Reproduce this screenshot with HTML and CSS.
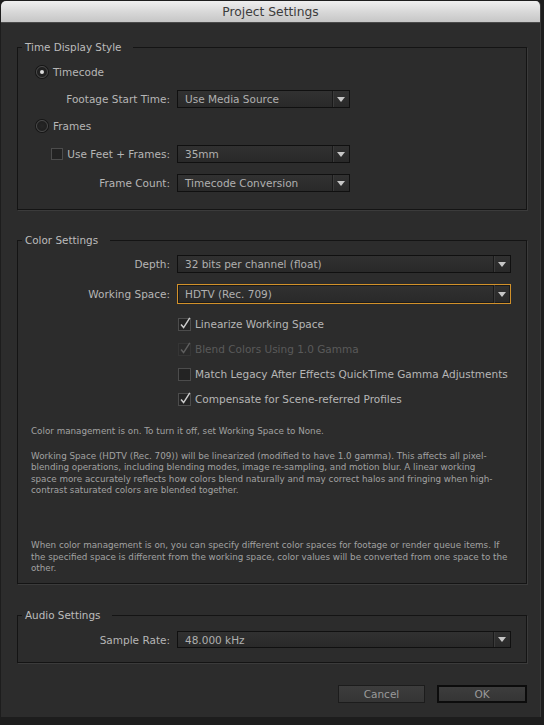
FILE: index.html
```html
<!DOCTYPE html>
<html lang="en">
<head>
<meta charset="utf-8">
<title>Project Settings</title>
<link rel="stylesheet" href="styles.css">
</head>
<body>
<div class="window">
  <div class="titlebar">Project Settings</div>
  <div class="content">
    <fieldset class="group g-time">
      <legend>Time Display Style</legend>
      <div class="radio-row tc-row"><span class="radio checked"></span><span class="lbl">Timecode</span></div>
      <div class="field-row footage-row">
        <span class="flabel">Footage Start Time:</span>
        <div class="select short"><span class="val">Use Media Source</span><span class="btn"><svg width="8" height="5" viewBox="0 0 8 5"><path d="M0 0H8L4 5Z" fill="#c6c6c6"/></svg></span></div>
      </div>
      <div class="radio-row frames-row"><span class="radio"></span><span class="lbl">Frames</span></div>
      <div class="field-row feet-row">
        <span class="flabel"><span class="box"></span>Use Feet + Frames:</span>
        <div class="select short"><span class="val">35mm</span><span class="btn"><svg width="8" height="5" viewBox="0 0 8 5"><path d="M0 0H8L4 5Z" fill="#c6c6c6"/></svg></span></div>
      </div>
      <div class="field-row count-row">
        <span class="flabel">Frame Count:</span>
        <div class="select short"><span class="val">Timecode Conversion</span><span class="btn"><svg width="8" height="5" viewBox="0 0 8 5"><path d="M0 0H8L4 5Z" fill="#c6c6c6"/></svg></span></div>
      </div>
    </fieldset>

    <fieldset class="group g-color">
      <legend>Color Settings</legend>
      <div class="field-row depth-row">
        <span class="flabel">Depth:</span>
        <div class="select wide"><span class="val">32 bits per channel (float)</span><span class="btn"><svg width="8" height="5" viewBox="0 0 8 5"><path d="M0 0H8L4 5Z" fill="#c6c6c6"/></svg></span></div>
      </div>
      <div class="field-row ws-row">
        <span class="flabel">Working Space:</span>
        <div class="select wide focused"><span class="val">HDTV (Rec. 709)</span><span class="btn"><svg width="8" height="5" viewBox="0 0 8 5"><path d="M0 0H8L4 5Z" fill="#c6c6c6"/></svg></span></div>
      </div>
      <div class="check-row first">
        <svg class="cb" width="14" height="14" viewBox="0 0 14 14"><rect x="0.5" y="1.5" width="12" height="12" fill="#232323" stroke="#4c4c4c"/><path d="M3 7.5L5.6 10.6L11.8 0.8" fill="none" stroke="#cbcbcb" stroke-width="1.5"/></svg>
        <span class="lbl">Linearize Working Space</span>
      </div>
      <div class="check-row disabled">
        <svg class="cb" width="14" height="14" viewBox="0 0 14 14"><rect x="0.5" y="1.5" width="12" height="12" fill="#2a2a2a" stroke="#353535"/><path d="M3 7.5L5.6 10.6L11.8 0.8" fill="none" stroke="#5e5e5e" stroke-width="1.5"/></svg>
        <span class="lbl">Blend Colors Using 1.0 Gamma</span>
      </div>
      <div class="check-row">
        <svg class="cb" width="14" height="14" viewBox="0 0 14 14"><rect x="0.5" y="1.5" width="12" height="12" fill="#232323" stroke="#4c4c4c"/></svg>
        <span class="lbl">Match Legacy After Effects QuickTime Gamma Adjustments</span>
      </div>
      <div class="check-row">
        <svg class="cb" width="14" height="14" viewBox="0 0 14 14"><rect x="0.5" y="1.5" width="12" height="12" fill="#232323" stroke="#4c4c4c"/><path d="M3 7.5L5.6 10.6L11.8 0.8" fill="none" stroke="#cbcbcb" stroke-width="1.5"/></svg>
        <span class="lbl">Compensate for Scene-referred Profiles</span>
      </div>
      <p class="info p1">Color management is on. To turn it off, set Working Space to None.</p>
      <p class="info p2">Working Space (HDTV (Rec. 709)) will be linearized (modified to have 1.0 gamma). This affects all pixel-<br>blending operations, including blending modes, image re-sampling, and motion blur. A linear working<br>space more accurately reflects how colors blend naturally and may correct halos and fringing when high-<br>contrast saturated colors are blended together.</p>
      <p class="info p3">When color management is on, you can specify different color spaces for footage or render queue items. If<br>the specified space is different from the working space, color values will be converted from one space to the<br>other.</p>
    </fieldset>

    <fieldset class="group g-audio">
      <legend>Audio Settings</legend>
      <div class="field-row rate-row">
        <span class="flabel">Sample Rate:</span>
        <div class="select wide"><span class="val">48.000 kHz</span><span class="btn"><svg width="8" height="5" viewBox="0 0 8 5"><path d="M0 0H8L4 5Z" fill="#c6c6c6"/></svg></span></div>
      </div>
    </fieldset>

    <div class="buttons">
      <button class="button cancel">Cancel</button>
      <button class="button ok">OK</button>
    </div>
  </div>
</div>
</body>
</html>
```

FILE: styles.css
```css
html, body {
  margin: 0;
  padding: 0;
}
body {
  background: #1d1d1d;
  width: 544px;
  height: 725px;
  overflow: hidden;
  font-family: "DejaVu Sans", "Liberation Sans", sans-serif;
}
.window {
  margin: 1px 0 0 1px;
  width: 540px;
  height: 716px;
  background: #2c2c2c;
  border-right: 1px solid #3a3a3a;
  border-radius: 5px 5px 0 0;
  overflow: hidden;
  box-sizing: border-box;
}
.titlebar {
  height: 21px;
  border-bottom: 1px solid #4a4a4a;
  background: linear-gradient(#efefef, #d9d9d9 50%, #c6c6c6);
  color: #3c3c3c;
  font-size: 12.3px;
  line-height: 22px;
  text-align: center;
}
.content {
  padding: 18px 0 0 16px;
}
.group {
  margin: 0;
  width: 510px;
  box-sizing: border-box;
  border: 1px solid #141414;
  padding: 0;
  min-width: 0;
  box-shadow: 1px 1px 0 #3b3b3b;
  color: #b6b6b6;
  font-size: 10.5px;
}
.group legend {
  margin-left: 4px;
  padding: 0 12px 0 3px;
  font-size: 10.4px;
  line-height: 13px;
  color: #bcbcbc;
}
.g-time { padding-bottom: 17px; }
.g-color { margin-top: 24px; padding-bottom: 8.5px; }
.g-audio { margin-top: 25px; padding-bottom: 14px; }

.radio-row, .field-row, .check-row {
  display: flex;
  align-items: center;
}
.radio-row {
  height: 18px;
  padding-left: 18px;
  margin-top: 9px;
}
.radio {
  width: 12px;
  height: 12px;
  border-radius: 50%;
  box-sizing: border-box;
  border: 1px solid #4a4a4a;
  background: radial-gradient(circle, #262626 0%, #1c1c1c 100%);
  box-shadow: 0 0 0 1px #161616;
  display: flex;
  align-items: center;
  justify-content: center;
  margin-right: 5px;
}
.radio.checked::after {
  content: "";
  width: 4px;
  height: 4px;
  border-radius: 50%;
  background: #dcdcdc;
}
.lbl {
  font-size: 10.5px;
  color: #b6b6b6;
  white-space: nowrap;
}
.field-row {
  height: 18px;
  margin-top: 9px;
}
.feet-row { margin-top: 10px; }
.count-row { margin-top: 11px; }
.depth-row { margin-top: 8px; }
.ws-row { margin-top: 11px; height: 20px; }
.rate-row { margin-top: 9px; height: 17px; }

.flabel {
  width: 152px;
  margin-right: 7px;
  text-align: right;
  white-space: nowrap;
  display: flex;
  align-items: center;
  justify-content: flex-end;
  color: #b6b6b6;
}
.box {
  width: 12px;
  height: 12px;
  box-sizing: border-box;
  border: 1px solid #4c4c4c;
  background: #232323;
  margin-right: 4px;
}
.select {
  display: flex;
  height: 100%;
  box-sizing: border-box;
  border: 1px solid #101010;
  background: linear-gradient(#313131, #292929);
  color: #b0b0b0;
}
.select.short { width: 173px; }
.select.wide { width: 334px; }
.select.focused {
  border-color: #d2912a;
  box-shadow: inset 0 0 0 1px #1a1a1a;
}
.select .val {
  flex: 1;
  padding-left: 7px;
  display: flex;
  align-items: center;
  white-space: nowrap;
  overflow: hidden;
}
.select .btn {
  width: 16px;
  border-left: 1px solid #1a1a1a;
  box-shadow: inset 1px 0 0 #3a3a3a;
  display: flex;
  align-items: center;
  justify-content: center;
}
.check-row {
  height: 16px;
  margin-top: 9px;
  padding-left: 160px;
}
.check-row.first { margin-top: 12px; }
.check-row .cb {
  margin-right: 3px;
  overflow: visible;
}
.check-row.disabled .lbl { color: #5a5a5a; }

.info {
  margin: 0;
  padding-left: 13px;
  font-size: 8.75px;
  line-height: 11.5px;
  color: #a2a2a2;
  white-space: nowrap;
}
.p1 { margin-top: 19px; }
.p2 { margin-top: 13px; }
.p3 { margin-top: 43.5px; }

.buttons {
  width: 510px;
  display: flex;
  justify-content: flex-end;
  gap: 12px;
  margin-top: 22px;
}
.button {
  height: 18px;
  font-family: "DejaVu Sans", "Liberation Sans", sans-serif;
  font-size: 10.5px;
  color: #9a9a9a;
  background: linear-gradient(#3d3d3d, #353535);
  border: 1px solid #1c1c1c;
  padding: 0;
  margin: 0;
}
.cancel { width: 87px; }
.ok {
  width: 90px;
  border: 2px solid #0c0c0c;
}
```
